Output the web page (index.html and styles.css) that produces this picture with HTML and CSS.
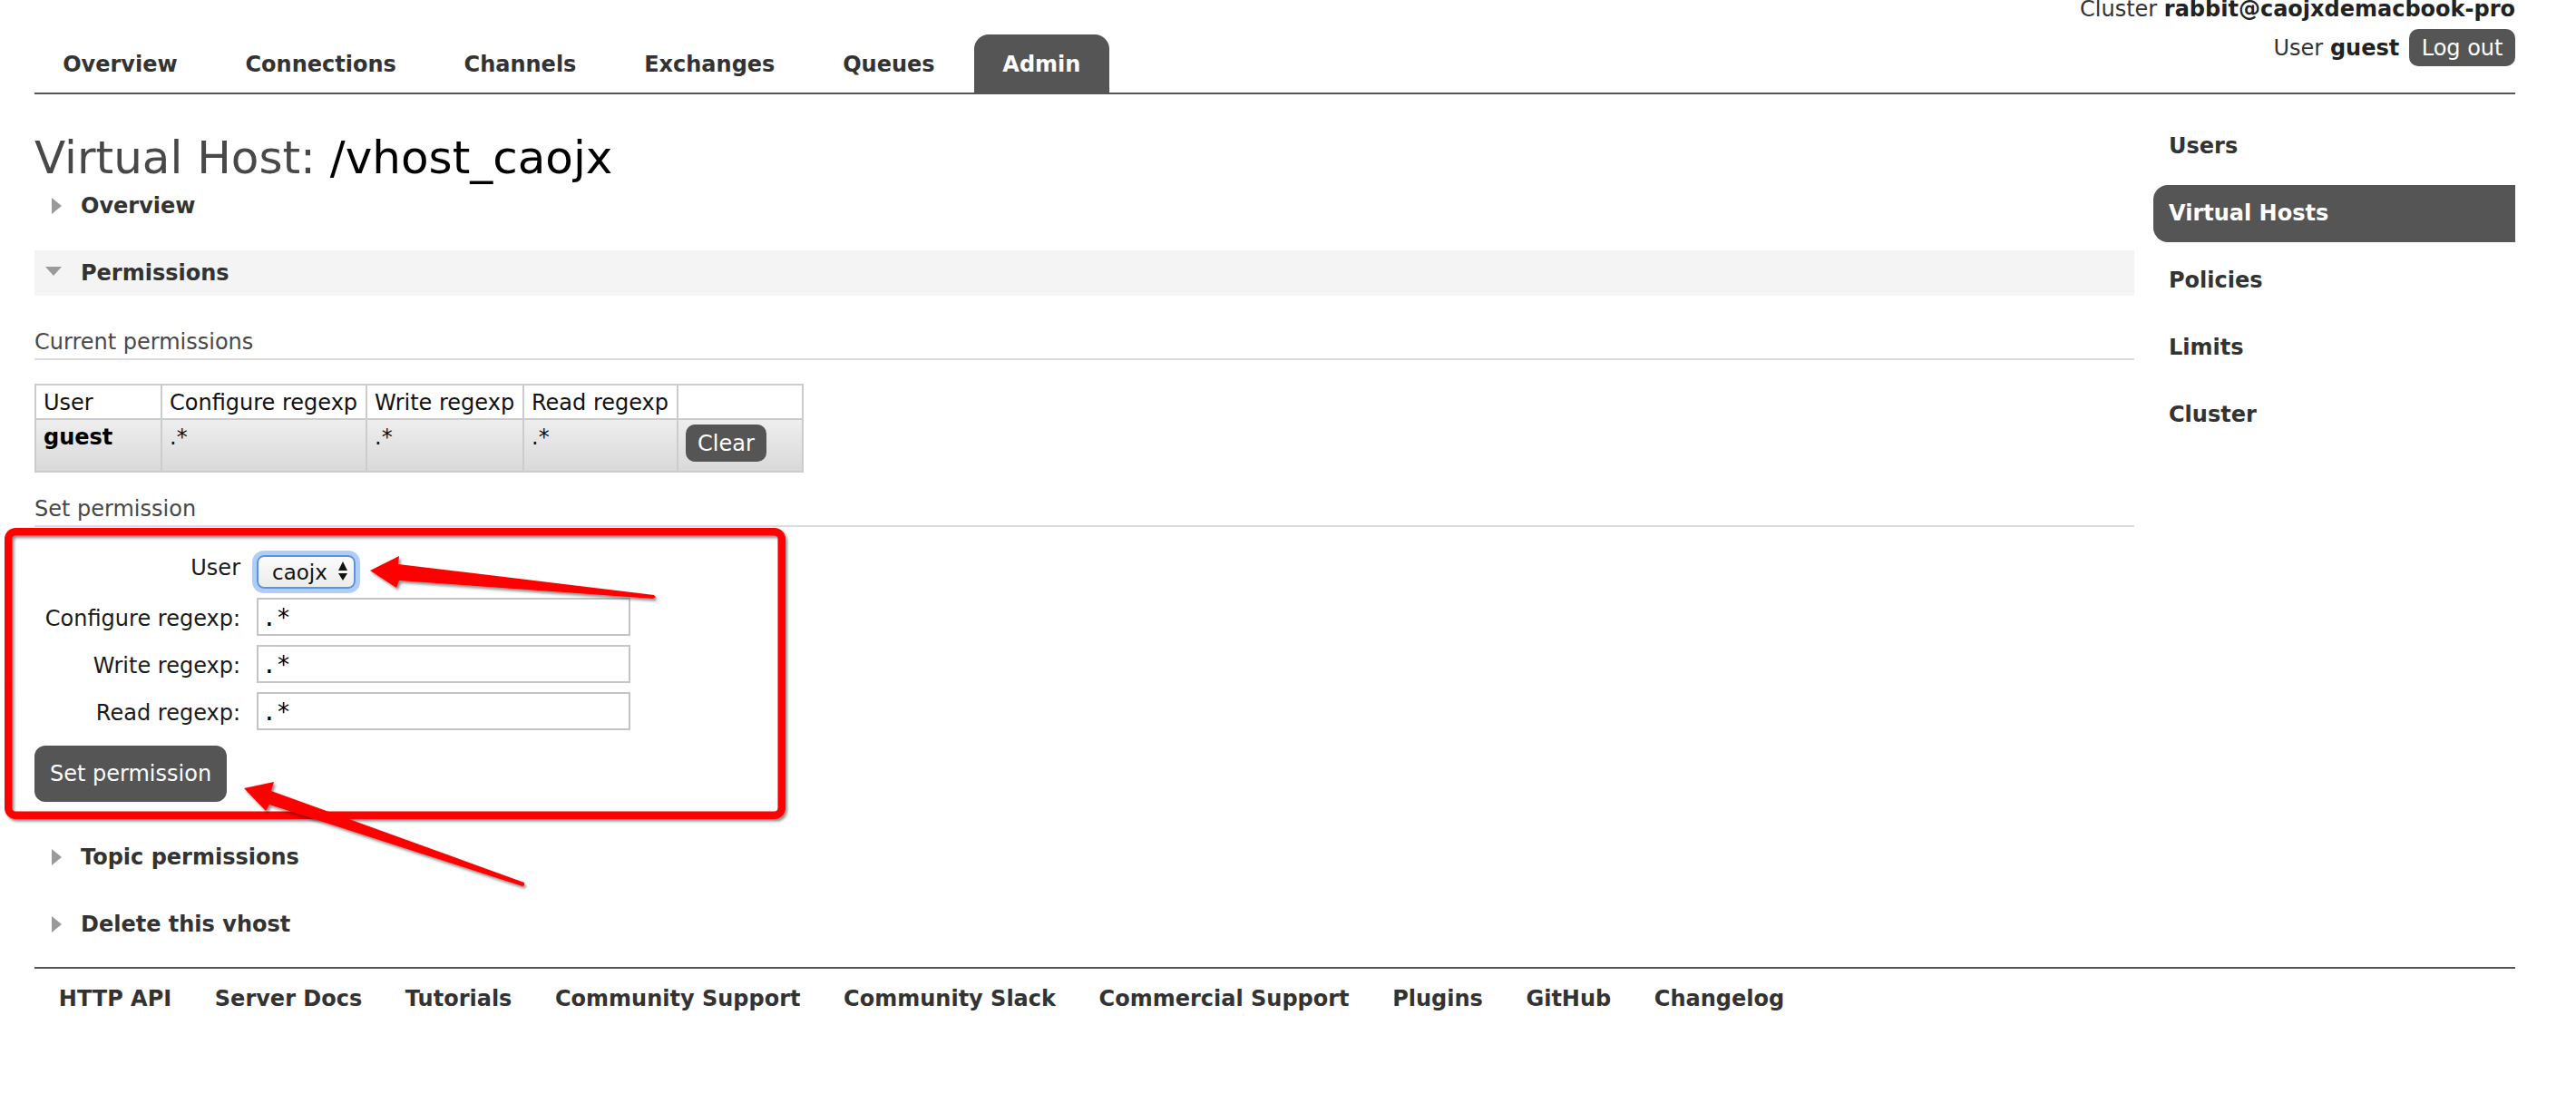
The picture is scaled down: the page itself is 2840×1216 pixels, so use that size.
FILE: index.html
```html
<!DOCTYPE html>
<html lang="en">
<head>
<meta charset="utf-8">
<title>RabbitMQ Management</title>
<link rel="stylesheet" href="styles.css">
</head>
<body>
<div class="outer">
  <header class="header">
    <nav class="tabs">
      <ul>
        <li><a href="#">Overview</a></li>
        <li><a href="#">Connections</a></li>
        <li><a href="#">Channels</a></li>
        <li><a href="#">Exchanges</a></li>
        <li><a href="#">Queues</a></li>
        <li><a href="#" class="selected">Admin</a></li>
      </ul>
    </nav>
    <div class="header-info">
      <div class="cluster">Cluster <b>rabbit@caojxdemacbook-pro</b></div>
      <div class="user">User&nbsp;<b>guest</b><button class="btn btn-logout" type="button">Log out</button></div>
    </div>
  </header>

  <div class="content">
    <main class="main">
      <h1>Virtual Host: <b>/vhost_caojx</b></h1>

      <section class="section">
        <h2><svg class="tri" width="24" height="24" viewBox="0 0 24 24"><polygon points="7,3 18,12 7,21"/></svg><span>Overview</span></h2>
      </section>

      <section class="section">
        <h2 class="open"><svg class="tri" width="24" height="24" viewBox="0 0 24 24"><polygon points="0,5 18,5 9,15"/></svg><span>Permissions</span></h2>
        <div class="section-body">
          <h3>Current permissions</h3>
          <table class="perm-table">
            <colgroup>
              <col class="c1"><col class="c2"><col class="c3"><col class="c4"><col class="c5">
            </colgroup>
            <thead>
              <tr><th>User</th><th>Configure regexp</th><th>Write regexp</th><th>Read regexp</th><th></th></tr>
            </thead>
            <tbody>
              <tr>
                <td class="uname">guest</td>
                <td>.*</td>
                <td>.*</td>
                <td>.*</td>
                <td><button class="btn btn-clear" type="button">Clear</button></td>
              </tr>
            </tbody>
          </table>

          <h3 class="set-title">Set permission</h3>
          <form class="perm-form">
            <div class="form-grid">
              <label class="lbl lbl-select" for="perm-user">User</label>
              <div class="select-wrap">
                <select id="perm-user"><option>caojx</option><option>guest</option></select>
                <svg class="select-arrows" width="10" height="21" viewBox="0 0 10 21"><polygon points="0,10 5,0 10,10"/><polygon points="0,13 10,13 5,21"/></svg>
              </div>
              <label class="lbl" for="perm-conf">Configure regexp:</label>
              <input id="perm-conf" class="txt" type="text" value=".*">
              <label class="lbl" for="perm-write">Write regexp:</label>
              <input id="perm-write" class="txt" type="text" value=".*">
              <label class="lbl" for="perm-read">Read regexp:</label>
              <input id="perm-read" class="txt" type="text" value=".*">
            </div>
            <button class="btn btn-large" type="button">Set permission</button>
          </form>
        </div>
      </section>

      <section class="section">
        <h2><svg class="tri" width="24" height="24" viewBox="0 0 24 24"><polygon points="7,3 18,12 7,21"/></svg><span>Topic permissions</span></h2>
      </section>

      <section class="section last">
        <h2><svg class="tri" width="24" height="24" viewBox="0 0 24 24"><polygon points="7,3 18,12 7,21"/></svg><span>Delete this vhost</span></h2>
      </section>
    </main>

    <aside class="rhs">
      <ul>
        <li><a href="#">Users</a></li>
        <li><a href="#" class="selected">Virtual Hosts</a></li>
        <li><a href="#">Policies</a></li>
        <li><a href="#">Limits</a></li>
        <li><a href="#">Cluster</a></li>
      </ul>
    </aside>
  </div>

  <footer class="footer">
    <ul>
      <li><a href="#">HTTP API</a></li>
      <li><a href="#">Server Docs</a></li>
      <li><a href="#">Tutorials</a></li>
      <li><a href="#">Community Support</a></li>
      <li><a href="#">Community Slack</a></li>
      <li><a href="#">Commercial Support</a></li>
      <li><a href="#">Plugins</a></li>
      <li><a href="#">GitHub</a></li>
      <li><a href="#">Changelog</a></li>
    </ul>
  </footer>
</div>

<svg class="annot" width="2840" height="1216" viewBox="0 0 2840 1216" aria-hidden="true">
  <defs>
    <filter id="sh" x="-10%" y="-10%" width="120%" height="120%">
      <feDropShadow dx="2" dy="2.5" stdDeviation="1.5" flood-color="#000" flood-opacity="0.45"/>
    </filter>
  </defs>
  <rect x="9.25" y="586.25" width="852.5" height="312.5" rx="8" ry="8" fill="none" stroke="#ff0000" stroke-width="8.5" filter="url(#sh)"/>
  <polygon points="408,629 440,613 439,622 721,656 723,658.5 720,660 440,640 437,648" fill="#ff0000" filter="url(#sh)"/>
  <polygon points="269,869 302,862 299,872 578,973 578,976 576,977 297,887 293,894" fill="#ff0000" filter="url(#sh)"/>
</svg>
</body>
</html>
```

FILE: styles.css
```css
* { box-sizing: border-box; }

html, body { margin: 0; padding: 0; }

body {
  position: relative;
  width: 2840px;
  min-height: 1216px;
  font-family: "DejaVu Sans", Verdana, sans-serif;
  font-size: 24px;
  line-height: 28px;
  color: #484848;
  background: #fff;
  overflow: hidden;
}

.outer { padding: 0 67px 0 38px; }

/* ---------- header ---------- */
.header {
  display: flex;
  justify-content: space-between;
  height: 104px;
  border-bottom: 2px solid #555;
}

.tabs { align-self: flex-end; }
.tabs ul { list-style: none; margin: 0; padding: 0; display: flex; }
.tabs li { padding-right: 2.4px; }
.tabs a {
  display: block;
  padding: 19px 31.2px 17px;
  margin-right: 10px;
  color: #333;
  font-weight: bold;
  text-decoration: none;
}
.tabs a.selected {
  background: #555;
  color: #fff;
  border-radius: 16px 16px 0 0;
}

.header-info {
  align-self: flex-start;
  margin-top: -4px;
  text-align: right;
  color: #333;
  white-space: nowrap;
}
.header-info b { color: #222; }
.user {
  display: flex;
  justify-content: flex-end;
  align-items: baseline;
  margin-top: 8px;
}

.btn {
  font-family: "DejaVu Sans", Verdana, sans-serif;
  font-size: 24px;
  line-height: 28px;
  color: #fff;
  background: #555;
  border: 0;
  border-radius: 10px;
  cursor: pointer;
}
.btn-logout { margin-left: 11px; padding: 7px 13.5px 6px; }
.btn-clear { display: block; padding: 7px 13px 6px; }
.btn-large { display: block; margin-top: 17px; padding: 17px 17px; border-radius: 12px; }

/* ---------- layout ---------- */
.content { display: flex; gap: 21px; }
.main { flex: 1; min-width: 0; }

.rhs { flex: none; width: 399px; padding-top: 26px; }
.rhs ul { list-style: none; margin: 0; padding: 0; }
.rhs li { margin-bottom: 11px; }
.rhs a {
  display: block;
  padding: 17px 17px 18px;
  font-weight: bold;
  color: #333;
  text-decoration: none;
}
.rhs a.selected {
  background: #555;
  color: #fff;
  border-radius: 16px 0 0 16px;
}

/* ---------- main ---------- */
h1 {
  margin: 42px 0 0;
  font-size: 50px;
  line-height: 56px;
  font-weight: normal;
  color: #484848;
}
h1 b { font-weight: normal; color: #000; }

.section { margin-bottom: 24px; }
.section.last { margin-bottom: 22px; }
.section h2 {
  display: flex;
  align-items: center;
  height: 50px;
  margin: 0;
  padding: 0 10px 0 12px;
  font-size: 24px;
  font-weight: bold;
  color: #333;
}
.section h2.open { background: #f4f4f4; }
.section h2 span { margin-left: 15px; }
.tri { flex: none; fill: #9a9a9a; }

.section-body { padding-bottom: 12px; }

h3 {
  margin: 37px 0 0;
  padding-bottom: 4px;
  font-size: 24px;
  font-weight: normal;
  line-height: 28px;
  color: #484848;
  border-bottom: 2px solid #ddd;
}
h3.set-title { margin-top: 26px; }

/* ---------- permissions table ---------- */
.perm-table {
  margin-top: 26px;
  width: 848px;
  table-layout: fixed;
  border-collapse: separate;
  border-spacing: 0;
  border-top: 2px solid #ccc;
  border-left: 2px solid #ccc;
  color: #111;
}
.perm-table col.c1 { width: 139px; }
.perm-table col.c2 { width: 226px; }
.perm-table col.c3 { width: 173px; }
.perm-table col.c4 { width: 170px; }
.perm-table col.c5 { width: 138px; }
.perm-table th,
.perm-table td {
  padding: 5px 8px 3px;
  border-right: 2px solid #ccc;
  border-bottom: 2px solid #ccc;
  text-align: left;
  vertical-align: top;
  font-weight: normal;
  white-space: nowrap;
}
.perm-table th { background: #fff; }
.perm-table td {
  height: 58px;
  background: linear-gradient(#eeeeee, #d9d9d9);
}
.perm-table td.uname { font-weight: bold; color: #000; }

/* ---------- form ---------- */
.form-grid {
  display: grid;
  grid-template-columns: 227px auto;
  column-gap: 18px;
  row-gap: 10px;
  align-items: start;
  justify-content: start;
  margin-top: 31px;
}
.lbl { text-align: right; color: #1a1a1a; padding-top: 9px; }
.lbl-select { padding-top: 0; }

.select-wrap { position: relative; width: 109px; height: 37px; }
.select-wrap select {
  -webkit-appearance: none;
  appearance: none;
  display: block;
  width: 109px;
  height: 37px;
  margin: 0;
  padding: 0 0 0 15px;
  font-family: "DejaVu Sans", Verdana, sans-serif;
  font-size: 23px;
  color: #111;
  background: linear-gradient(#fbfbfb, #ececec);
  border: 2px solid #5b93e3;
  border-radius: 8px;
  box-shadow: 0 0 0 5px rgba(125, 172, 240, 0.6);
  outline: none;
}
.select-arrows {
  position: absolute;
  left: 90px;
  top: 7px;
  fill: #111;
  pointer-events: none;
}

.txt {
  display: block;
  width: 412px;
  height: 42px;
  margin: 0;
  padding: 6px 8px 4px 4px;
  font-family: "DejaVu Sans Mono", "Liberation Mono", monospace;
  font-size: 26px;
  line-height: 28px;
  color: #000;
  background: #fff;
  border: 2px solid #c4c4c4;
  border-radius: 0;
  outline: none;
}

/* ---------- footer ---------- */
.footer { border-top: 2px solid #555; }
.footer ul { list-style: none; margin: 0; padding: 19px 0 0 3px; display: flex; }
.footer a {
  display: block;
  padding: 0 23.8px;
  font-weight: bold;
  color: #333;
  text-decoration: none;
  white-space: nowrap;
}

/* ---------- screenshot annotations (overlay) ---------- */
.annot {
  position: absolute;
  left: 0;
  top: 0;
  pointer-events: none;
}
```
